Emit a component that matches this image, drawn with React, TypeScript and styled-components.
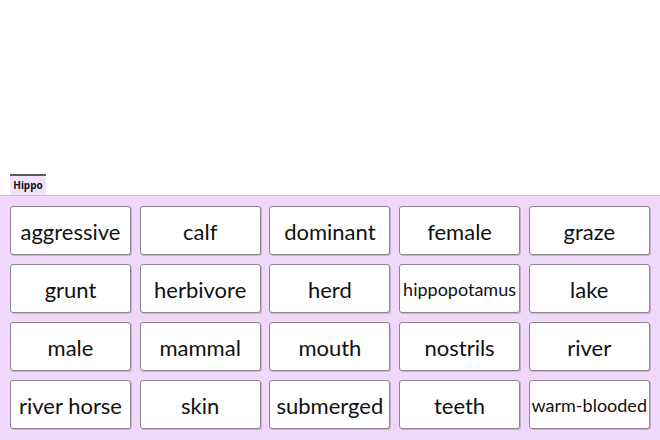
import React from "react";
import styled, { createGlobalStyle } from "styled-components";

const words: { text: string; size?: number }[] = [
  { text: "aggressive" },
  { text: "calf" },
  { text: "dominant" },
  { text: "female" },
  { text: "graze" },
  { text: "grunt" },
  { text: "herbivore" },
  { text: "herd" },
  { text: "hippopotamus", size: 18 },
  { text: "lake" },
  { text: "male" },
  { text: "mammal" },
  { text: "mouth" },
  { text: "nostrils" },
  { text: "river" },
  { text: "river horse" },
  { text: "skin" },
  { text: "submerged" },
  { text: "teeth" },
  { text: "warm-blooded", size: 18 },
];

const GlobalStyle = createGlobalStyle`
  html, body {
    margin: 0;
    padding: 0;
    background: #ffffff;
  }
  body {
    font-family: Lato, "Open Sans", sans-serif;
  }
`;

const Page = styled.div`
  width: 660px;
  height: 440px;
  display: flex;
  flex-direction: column;
  overflow: hidden;
`;

const Spacer = styled.div`
  height: 174px;
  flex-shrink: 0;
`;

const TabBar = styled.div`
  display: flex;
  padding-left: 10px;
  height: 21px;
  flex-shrink: 0;
`;

const Tab = styled.div`
  width: 36px;
  border-top: 2px solid #5a5a5a;
  background: #f3e2fb;
  font-family: "Noto Sans", sans-serif;
  font-weight: bold;
  font-size: 10px;
  color: #111;
  display: flex;
  align-items: center;
  justify-content: center;
  box-sizing: border-box;
  padding-bottom: 1px;
`;

const Panel = styled.div`
  flex: 1;
  background: #efd8f9;
  border-top: 1px solid #cdbcd6;
  padding: 10px 0 0 10px;
`;

const Grid = styled.div`
  display: grid;
  grid-template-columns: repeat(5, 121px);
  grid-auto-rows: 49px;
  column-gap: 8.7px;
  row-gap: 9px;
`;

const Card = styled.div<{ $size?: number }>`
  background: #ffffff;
  border: 1px solid #8d8590;
  border-radius: 3px;
  box-shadow: 1px 1px 0 rgba(120, 110, 125, 0.35);
  display: flex;
  align-items: center;
  justify-content: center;
  font-size: ${(p) => p.$size ?? 22}px;
  color: #111;
  white-space: nowrap;
  padding-top: 1px;
  box-sizing: border-box;
`;

const App: React.FC = () => {
  return (
    <Page>
      <GlobalStyle />
      <Spacer />
      <TabBar>
        <Tab>Hippo</Tab>
      </TabBar>
      <Panel>
        <Grid>
          {words.map((w) => (
            <Card key={w.text} $size={w.size}>
              {w.text}
            </Card>
          ))}
        </Grid>
      </Panel>
    </Page>
  );
};

export default App;
